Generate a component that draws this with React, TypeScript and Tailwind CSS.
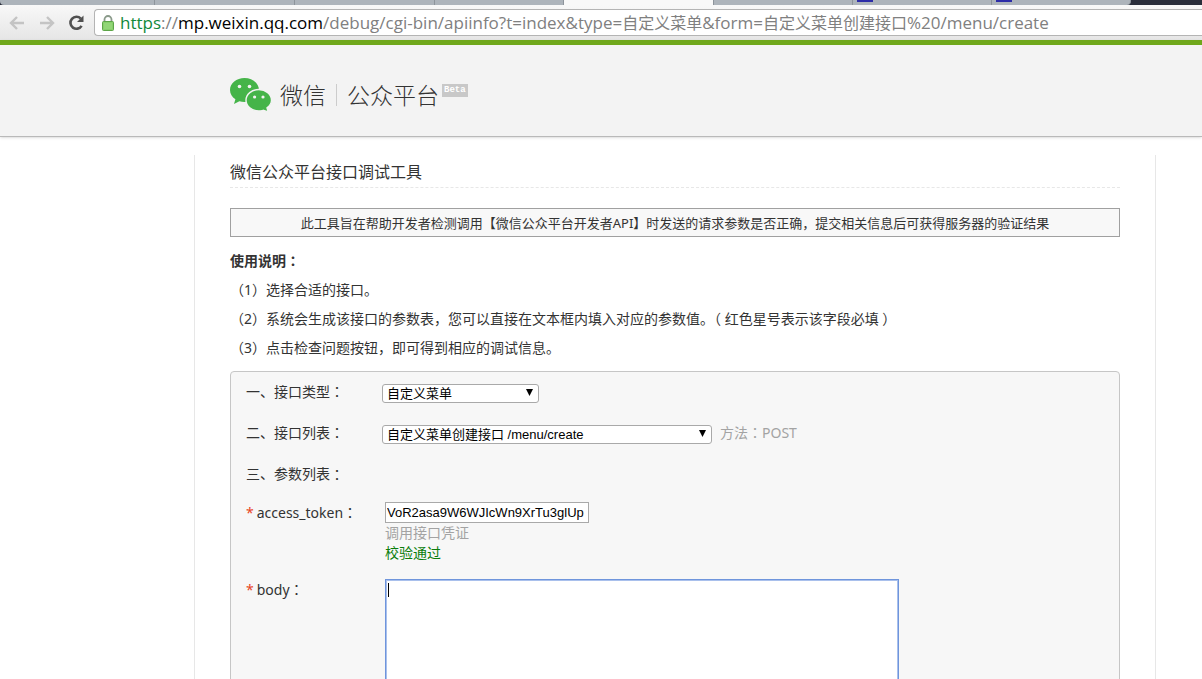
import type { ReactNode } from 'react';

const TABS = [
  { width: 'w-[155px]', active: false, icon: false },
  { width: 'w-[140px]', active: false, icon: false },
  { width: 'w-[140px]', active: false, icon: false },
  { width: 'w-[129px]', active: false, icon: false },
  { width: 'w-[150px]', active: true, icon: false },
  { width: 'w-[139px]', active: false, icon: false },
  { width: 'w-[139px]', active: false, icon: true },
  { width: 'w-[139px]', active: false, icon: true },
];

const STEPS = [
  '（1）选择合适的接口。',
  '（2）系统会生成该接口的参数表，您可以直接在文本框内填入对应的参数值。（ 红色星号表示该字段必填 ）',
  '（3）点击检查问题按钮，即可得到相应的调试信息。',
];

// The TC face centres the full-width colon in its box
function Colon() {
  return <span className="font-['Noto_Sans_CJK_TC',sans-serif]">：</span>;
}

function BackIcon() {
  return (
    <svg viewBox="0 0 18 16" className="w-[18px] h-4" fill="none" stroke="currentColor" strokeWidth="2.4">
      <path d="M9 2L3 8l6 6M3 8h13" />
    </svg>
  );
}

function ForwardIcon() {
  return (
    <svg viewBox="0 0 18 16" className="w-[18px] h-4" fill="none" stroke="currentColor" strokeWidth="2.4">
      <path d="M9 2l6 6-6 6M15 8H2" />
    </svg>
  );
}

function ReloadIcon() {
  return (
    <svg viewBox="0 0 18 18" className="w-[18px] h-[18px]">
      <path d="M12.800 4.600A6 6 0 1 0 13.600 11.800" fill="none" stroke="currentColor" strokeWidth="2.600" />
      <path d="M15.500 1.500V8H9z" fill="currentColor" />
    </svg>
  );
}

function LockIcon() {
  return (
    <svg viewBox="0 0 12 16" className="w-3 h-4 shrink-0">
      <path d="M2.500 8V4.500a3.500 3.500 0 0 1 7 0V8" fill="none" stroke="#8a9a8a" strokeWidth="1.8" />
      <rect x="0.5" y="6.500" width="11" height="9" rx="1" fill="#86cf6b" stroke="#5da548" />
      <path d="M2 9h8M2 11h8M2 13h8" stroke="#a5e08c" strokeWidth="0.8" />
    </svg>
  );
}

function WechatLogo() {
  return (
    <svg viewBox="0 0 42 34" className="w-[42px] h-[34px]" aria-label="微信">
      <path
        d="M14.500 0C6.500 0 0 5.300 0 12c0 3.800 2.100 7.100 5.400 9.300L4 26l5.400-2.800c1.600.5 3.300.8 5.100.8C22.500 24 29 18.700 29 12S22.500 0 14.500 0z"
        fill="#45b449"
      />
      <circle cx="9.500" cy="8.500" r="1.800" fill="#f3f3f3" />
      <circle cx="19.500" cy="8.500" r="1.800" fill="#f3f3f3" />
      <path
        d="M28.800 11.500c-7 0-12.800 4.700-12.800 10.700s5.700 10.700 12.800 10.700c1.500 0 3-.2 4.300-.6l5.300 1.700-1.400-4.100c2.800-2 4.500-4.500 4.500-7.700 0-6-5.700-10.700-12.700-10.700z"
        fill="#45b449"
        stroke="#f3f3f3"
        strokeWidth="1.400"
      />
      <circle cx="24.600" cy="19" r="1.600" fill="#f3f3f3" />
      <circle cx="33" cy="19" r="1.600" fill="#f3f3f3" />
    </svg>
  );
}

function BrowserBar() {
  return (
    <div>
      <div className="flex h-[5px] bg-[#2a2e3b] overflow-hidden">
        {TABS.map((tab, i) => (
          <div
            key={i}
            className={`${tab.width} shrink-0 border-r border-[#8d949b] first:rounded-bl-sm last:rounded-br-sm ${tab.active ? 'bg-[#f8f8f8]' : 'bg-[#adb4bb]'}`}
          >
            {tab.icon && <div className="w-4 h-[2px] ml-1 bg-[#2d2da8]" />}
          </div>
        ))}
      </div>
      <div className="flex items-center h-[35px] bg-linear-to-b from-[#f8f8f8] to-[#e6e6e6]">
        <div className="flex items-center w-[94px] pl-2 gap-3 shrink-0">
          <button aria-label="后退" className="text-[#c4c4c4]">
            <BackIcon />
          </button>
          <button aria-label="前进" className="text-[#c4c4c4]">
            <ForwardIcon />
          </button>
          <button aria-label="重新加载" className="text-[#505050]">
            <ReloadIcon />
          </button>
        </div>
        <div className="flex items-center flex-1 min-w-0 h-[27px] pl-[7px] gap-[6px] bg-white border border-r-0 border-[#b4b4b4] rounded-l-sm">
          <LockIcon />
          <div
            role="textbox"
            aria-label="地址"
            contentEditable
            suppressContentEditableWarning
            className="flex-1 whitespace-nowrap overflow-hidden text-[17px] leading-6 text-[#808080] font-['Open_Sans','Noto_Sans_CJK_SC',sans-serif]"
          >
            <span className="text-[#11893b]">https</span>://<span className="text-black">mp.weixin.qq.com</span>
            /debug/cgi-bin/apiinfo?t=index&amp;type=<span className="text-base">自定义菜单</span>&amp;form=
            <span className="text-base">自定义菜单创建接口</span>%20/menu/create
          </div>
        </div>
      </div>
    </div>
  );
}

function Select({ id, width, children }: { id: string; width: string; children: ReactNode }) {
  return (
    <div className={`relative ${width}`}>
      <select
        id={id}
        className="block appearance-none w-full h-[19px] pl-1 pr-5 bg-white border border-[#a9a9a9] rounded-[3px] text-[13px] leading-4 text-black font-['Liberation_Sans','Noto_Sans_CJK_SC',sans-serif]"
      >
        {children}
      </select>
      <svg viewBox="0 0 7 7" className="absolute right-[6px] top-[5px] w-[7px] h-[7px] pointer-events-none">
        <path d="M0 0h7L3.500 7z" fill="#000" />
      </svg>
    </div>
  );
}

function RequiredLabel({ htmlFor, children }: { htmlFor: string; children: ReactNode }) {
  return (
    <label htmlFor={htmlFor} className="w-[139px] shrink-0 leading-5">
      <span className="text-[#e8451f] mr-[3px]">*</span>
      {children}
      <Colon />
    </label>
  );
}

export default function App() {
  return (
    <div className="h-screen overflow-hidden bg-white text-sm text-[#333] font-['Noto_Sans','Noto_Sans_CJK_SC',sans-serif]">
      <BrowserBar />

      <header className="flex items-center h-[97px] pl-[230px] border-t-[5px] border-t-[#6fa71b] border-b border-b-[#b9b9b9] bg-[#f3f3f3] shadow-sm">
        <a href="#" className="flex items-center pt-2">
          <WechatLogo />
          <span className="ml-2 text-[23px] leading-8 font-light text-[#333]">微信</span>
          <span className="w-px h-[22px] mx-[10px] bg-[#ccc]" />
          <span className="text-[23px] leading-8 font-light text-[#333]">公众平台</span>
          <span className="self-start mt-[6px] ml-[3px] px-[2px] bg-[#c8c8c8] text-white text-[9px] leading-[13px] font-bold font-['Liberation_Mono',monospace]">
            Beta
          </span>
        </a>
      </header>

      <main className="max-w-[962px] ml-[194px] mt-[18px] px-[35px] border-x border-[#e7e7e7]">
        <h1 className="h-[33px] pt-[5px] text-base leading-6 border-b border-dashed border-[#e7e7e7]">
          微信公众平台接口调试工具
        </h1>
        <p className="mt-5 h-[29px] text-center text-[13px] leading-7 bg-[#f8f8f8] border border-[#a0a0a0]">
          此工具旨在帮助开发者检测调用【微信公众平台开发者API】时发送的请求参数是否正确，提交相关信息后可获得服务器的验证结果
        </p>

        <h2 className="mt-[9px] font-bold leading-[29px]">
          使用说明<Colon />
        </h2>
        <ul className="leading-[29px]">
          {STEPS.map((step) => (
            <li key={step}>{step}</li>
          ))}
        </ul>

        <form className="mt-[9px] pl-[15px] bg-[#f7f7f7] border border-[#c6c6c6] rounded-t-sm">
          <div className="flex items-center h-[41px] pt-[2px]">
            <label htmlFor="type" className="w-[136px] pb-1">
              一、接口类型<Colon />
            </label>
            <Select id="type" width="w-[157px]">
              <option>自定义菜单</option>
            </Select>
          </div>
          <div className="flex items-center h-[41px] pt-[2px]">
            <label htmlFor="api" className="w-[136px] pb-1">
              二、接口列表<Colon />
            </label>
            <Select id="api" width="w-[330px]">
              <option>自定义菜单创建接口 /menu/create</option>
            </Select>
            <span className="ml-2 pb-1 text-[#a3a3a3]">
              方法<Colon />POST
            </span>
          </div>
          <div className="flex items-center h-[41px] pb-[2px]">
            三、参数列表<Colon />
          </div>

          <div className="flex pt-[7px]">
            <RequiredLabel htmlFor="token">access_token</RequiredLabel>
            <div>
              <input
                id="token"
                type="text"
                defaultValue="VoR2asa9W6WJIcWn9XrTu3glUp"
                className="block w-[204px] h-[21px] px-px bg-white border border-[#a9a9a9] text-[13px] text-black font-['Liberation_Sans',sans-serif]"
              />
              <p className="leading-5 text-[#a3a3a3]">调用接口凭证</p>
              <p className="leading-5 text-[#0a7d0a]">校验通过</p>
            </div>
          </div>
          <div className="flex pt-4">
            <RequiredLabel htmlFor="body">body</RequiredLabel>
            <div className="relative">
              <textarea
                id="body"
                className="block w-[514px] h-[200px] p-[2px] bg-white border border-[#6f95dc] inset-ring inset-ring-[#a9c0ec] outline-none resize-none caret-transparent"
              />
              <span className="absolute left-[3px] top-1 w-px h-[14px] bg-black pointer-events-none" />
            </div>
          </div>
        </form>
      </main>
    </div>
  );
}
